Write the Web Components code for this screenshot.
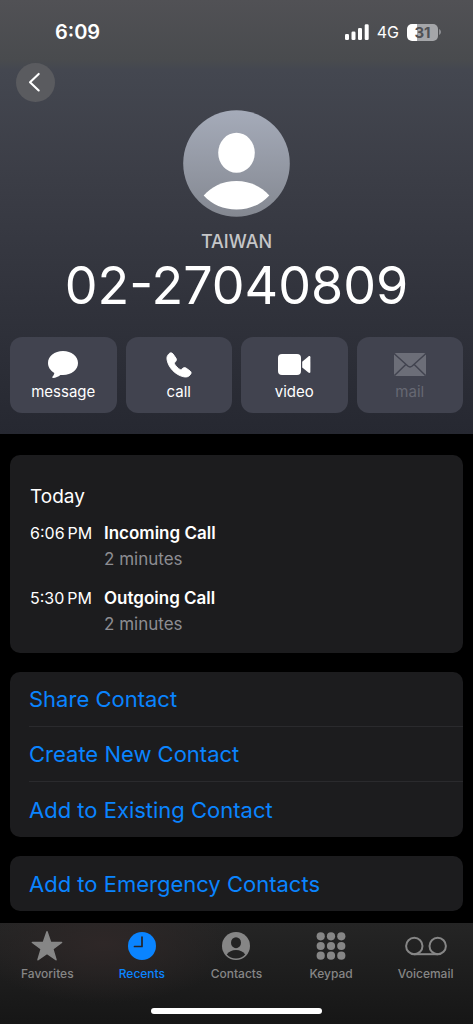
<!DOCTYPE html>
<html lang="en">
<head>
<meta charset="utf-8">
<meta name="viewport" content="width=device-width, initial-scale=1">
<title>Call details</title>
<style>
  html, body { margin: 0; background: #000; }
  body { font-family: Inter, "Liberation Sans", sans-serif; color: #fff; -webkit-font-smoothing: antialiased; }
</style>
</head>
<body>
<call-screen></call-screen>

<script>
const define = (name, html, setup) => {
  const template = document.createElement('template');
  template.innerHTML = html;
  customElements.define(name, class extends HTMLElement {
    constructor() {
      super();
      this.attachShadow({ mode: 'open' }).append(template.content.cloneNode(true));
    }
    connectedCallback() { if (setup) setup(this, this.shadowRoot); }
  });
};

define('status-bar', `
  <style>
    :host { display: flex; justify-content: space-between; align-items: center; height: 64px; padding: 0 32px 0 55px; box-sizing: border-box; }
    time { font-size: 20px; line-height: 24px; font-weight: 600; }
    .right { display: flex; align-items: center; gap: 8px; font-size: 16px; line-height: 20px; font-weight: 400; }
    .battery { display: flex; align-items: center; gap: 1px; }
    .level { width: 31px; height: 17px; border-radius: 5px; background: linear-gradient(90deg, #fff 31%, #a5a6a9 31%); color: #505155; font-size: 15px; line-height: 17px; font-weight: 700; text-align: center; }
    svg { display: block; }
  </style>
  <time>6:09</time>
  <div class="right">
    <svg width="24" height="16" viewBox="0 0 24 16" fill="#fff" aria-hidden="true">
      <rect x="0" y="10" width="4" height="6" rx="1.3"/><rect x="6.5" y="7.5" width="4" height="8.5" rx="1.3"/>
      <rect x="13" y="4" width="4" height="12" rx="1.3"/><rect x="19.7" y="0.3" width="4" height="15.7" rx="1.3"/>
    </svg>
    <span>4G</span>
    <div class="battery">
      <div class="level">31</div>
      <svg width="2" height="6" viewBox="0 0 2 6" aria-hidden="true"><path d="M0 0C1.2.5 2 1.700 2 3S1.200 5.500 0 6z" fill="#8c8d91"/></svg>
    </div>
  </div>`);

define('back-button', `
  <style>
    :host { display: block; }
    button { display: grid; place-items: center; width: 39px; height: 39px; padding: 0; border: 0; border-radius: 50%; background: #5a5b5f; }
  </style>
  <button type="button" aria-label="Back">
    <svg width="39" height="39" viewBox="0 0 39 39" fill="none" stroke="#fff" stroke-width="2.100" stroke-linecap="round" stroke-linejoin="round"><path d="M22.700 10.900L14 19.200l8.700 8.300"/></svg>
  </button>`);

define('contact-avatar', `
  <style>:host { display: block; } svg { display: block; }</style>
  <svg width="107" height="107" viewBox="0 0 107 107" role="img" aria-label="Contact photo">
    <defs><linearGradient id="g" x1="0" y1="0" x2="0" y2="1"><stop offset="0" stop-color="#a5abb9"/><stop offset="1" stop-color="#848891"/></linearGradient></defs>
    <circle cx="53.500" cy="53.500" r="53.300" fill="url(#g)"/>
    <ellipse cx="53.500" cy="42.800" rx="18.300" ry="20" fill="#fff"/>
    <path d="M20.700 85.500C28 77 39.500 71 53.500 71S79 77 86.300 85.500C78 94.500 66.500 99.500 53.500 99.500S29 94.500 20.700 85.500z" fill="#fff"/>
  </svg>`);

define('quick-action', `
  <style>
    :host { display: block; flex: 1; min-width: 0; }
    button { display: flex; flex-direction: column; align-items: center; gap: 3px; width: 100%; height: 76px; padding: 12px 0 0; border: 0; border-radius: 12px; background: #41434f; color: #fff; font: 400 15px/20px Inter, "Liberation Sans", sans-serif; }
    button:disabled { color: #666873; }
    ::slotted(svg) { display: block; }
  </style>
  <button type="button"><slot name="icon"></slot><span><slot></slot></span></button>`,
  (host, root) => { root.querySelector('button').disabled = host.hasAttribute('disabled'); });

define('contact-header', `
  <style>
    :host { display: block; background: linear-gradient(#515155 0, #494b4e 60px, #444750 70px, #3b3d46 180px, #30323b 310px, #262831 434px); }
    .nav { padding: 0 16px; margin-top: -1px; }
    .who { display: flex; flex-direction: column; align-items: center; margin-top: 8px; }
    p { margin: 14px 0 0; font-size: 18px; line-height: 22px; font-weight: 500; color: #c5c6c8; }
    h1 { margin: 5px 0 0; font-size: 52px; line-height: 56px; font-weight: 400; }
    .actions { display: flex; gap: 9px; padding: 23px 10px 21px; }
  </style>
  <status-bar></status-bar>
  <div class="nav"><back-button></back-button></div>
  <div class="who">
    <contact-avatar></contact-avatar>
    <p>TAIWAN</p>
    <h1>02-27040809</h1>
  </div>
  <div class="actions">
    <quick-action>
      <svg slot="icon" width="34" height="30" viewBox="0 0 34 30" fill="#fff"><path d="M17 2C8.500 2 2 7.200 2 14c0 4.200 2.400 7.600 6.300 9.900-.1 1.300-.9 2.900-1.900 3.900-.5.600-.1 1.200.7 1.200 2.600-.1 5.100-1.500 7.300-3.100.9.100 1.700.2 2.600.2C25.500 26 32 20.800 32 14S25.500 2 17 2z"/></svg>message</quick-action>
    <quick-action>
      <svg slot="icon" width="30" height="30" viewBox="0 0 30 30" fill="#fff" stroke="#fff" stroke-width=".9" stroke-linejoin="round"><path d="M4.600 5.200C6 3.500 7.600 3.400 8.900 4.800l3 4.300c.8 1.300.7 2.300-.2 3.300l-1 1.200c-.4.500-.4 1 0 1.600 1.200 2 3.200 4 5.200 5.200.6.400 1.100.4 1.600 0l1.400-1.200c1-.8 2.100-.9 3.200-.1l4 2.900c1.300 1 1.300 2.300.2 3.700-1.800 2.200-4 2.800-7 2C11.500 25.900 4.600 18.900 3.100 11c-.5-2.400 0-4.200 1.500-5.800z"/></svg>call</quick-action>
    <quick-action>
      <svg slot="icon" width="34" height="30" viewBox="0 0 34 30" fill="#fff"><rect x="1" y="5" width="23" height="21" rx="4"/><path d="M25.200 12.800l6.200-5.400c.9-.7 2-.4 2 .8v14.600c0 1.200-1.100 1.500-2 .8l-6.200-5.200z"/></svg>video</quick-action>
    <quick-action disabled>
      <svg slot="icon" width="34" height="30" viewBox="0 0 34 30"><rect x="1" y="4" width="32" height="23" rx="2" fill="#6c6e78"/><path d="M1 4.500l13.800 12.500q2.200 1.800 4.400 0L33 4.500M1.500 26.500l11.300-11M32.500 26.500l-11.300-11" fill="none" stroke="#41434f" stroke-width="1.500"/></svg>mail</quick-action>
  </div>`);

define('inset-card', `
  <style>:host { display: block; margin: 0 10px; border-radius: 10px; background: #1c1c1e; overflow: hidden; }</style>
  <slot></slot>`);

define('call-entry', `
  <style>
    :host { display: grid; grid-template-columns: 74px 1fr; line-height: 26px; font-size: 17px; }
    time { font-size: 16px; white-space: nowrap; }
    b { font-weight: 600; }
    .length { grid-column: 2; color: #8d8d92; }
  </style>
  <time><slot name="time"></slot></time>
  <b><slot></slot></b>
  <span class="length"><slot name="length"></slot></span>`);

define('call-log', `
  <style>
    :host { display: block; padding: 29px 20px 16px; }
    h2 { margin: 0 0 10px; font-size: 19px; line-height: 26px; font-weight: 400; }
    .list { display: flex; flex-direction: column; gap: 13px; }
  </style>
  <h2>Today</h2>
  <div class="list">
    <call-entry><span slot="time">6:06&#8239;PM</span>Incoming Call<span slot="length">2 minutes</span></call-entry>
    <call-entry><span slot="time">5:30&#8239;PM</span>Outgoing Call<span slot="length">2 minutes</span></call-entry>
  </div>`);

define('action-row', `
  <style>
    :host { display: block; padding-left: 19px; }
    button { display: block; width: 100%; height: 55px; padding: 0; border: 0; background: none; text-align: left; color: #0a84ff; font: 400 22px/54px Inter, "Liberation Sans", sans-serif; }
    :host([divided]) button { border-bottom: 1px solid #2a2a2d; }
  </style>
  <button type="button"><slot></slot></button>`);

define('tab-item', `
  <style>
    :host { display: block; flex: 1; min-width: 0; }
    a { display: flex; flex-direction: column; align-items: center; gap: 4px; color: #868686; text-decoration: none; font-size: 12px; line-height: 16px; font-weight: 500; }
    :host([current]) a { color: #0a84ff; }
    ::slotted(svg) { display: block; }
  </style>
  <a href="#"><slot name="icon"></slot><span><slot></slot></span></a>`,
  (host, root) => { if (host.hasAttribute('current')) root.querySelector('a').setAttribute('aria-current', 'page'); });

define('tab-bar', `
  <style>
    :host { display: block; background: radial-gradient(ellipse 130px 60px at 22% 20%, #2e2727, transparent), linear-gradient(#252525, #161616); }
    nav { display: flex; padding-top: 8px; }
    .home { width: 36%; height: 6px; margin: 26px auto 10px; border-radius: 3px; background: #fff; }
  </style>
  <nav aria-label="Phone">
    <tab-item><svg slot="icon" width="32" height="31" viewBox="0 0 32 31" fill="currentColor" stroke="currentColor" stroke-width="1.500" stroke-linejoin="round"><path d="M16 .8l3.600 10.500 11 .1-8.800 6.600 3.200 10.700L16 22.300 7 28.700 10.200 18 1.400 11.400l11-.1z"/></svg>Favorites</tab-item>
    <tab-item current><svg slot="icon" width="30" height="31" viewBox="0 0 30 31"><circle cx="15" cy="15" r="14" fill="currentColor"/><path d="M15 6v9.500H7.500" fill="none" stroke="#252326" stroke-width="1.700" stroke-linecap="round" stroke-linejoin="round"/></svg>Recents</tab-item>
    <tab-item><svg slot="icon" width="30" height="31" viewBox="0 0 30 31"><circle cx="15" cy="15" r="14" fill="currentColor"/><ellipse cx="15" cy="11.700" rx="5" ry="5.500" fill="#232323"/><path d="M5.800 23.500C7.800 20.500 11 19 15 19s7.200 1.500 9.200 4.500C21.800 26.100 18.700 27.500 15 27.500s-6.800-1.400-9.200-4z" fill="#232323"/></svg>Contacts</tab-item>
    <tab-item><svg slot="icon" width="30" height="31" viewBox="0 0 30 31" fill="currentColor"><circle cx="4.700" cy="5.300" r="4.100"/><circle cx="15" cy="5.300" r="4.100"/><circle cx="25.300" cy="5.300" r="4.100"/><circle cx="4.700" cy="15" r="4.100"/><circle cx="15" cy="15" r="4.100"/><circle cx="25.300" cy="15" r="4.100"/><circle cx="4.700" cy="24.700" r="4.100"/><circle cx="15" cy="24.700" r="4.100"/><circle cx="25.300" cy="24.700" r="4.100"/></svg>Keypad</tab-item>
    <tab-item><svg slot="icon" width="42" height="31" viewBox="0 0 42 31" fill="none" stroke="currentColor" stroke-width="2"><circle cx="9.300" cy="15" r="8.200"/><circle cx="32.700" cy="15" r="8.200"/><path d="M9 23.200h24"/></svg>Voicemail</tab-item>
  </nav>
  <div class="home"></div>`);

define('call-screen', `
  <style>
    :host { display: flex; flex-direction: column; min-height: 100vh; }
    main { flex: 1; display: flex; flex-direction: column; gap: 19px; padding: 21px 0 12px; }
  </style>
  <contact-header></contact-header>
  <main>
    <inset-card><call-log></call-log></inset-card>
    <inset-card>
      <action-row divided>Share Contact</action-row>
      <action-row divided>Create New Contact</action-row>
      <action-row>Add to Existing Contact</action-row>
    </inset-card>
    <inset-card><action-row>Add to Emergency Contacts</action-row></inset-card>
  </main>
  <tab-bar></tab-bar>`);
</script>
</body>
</html>
